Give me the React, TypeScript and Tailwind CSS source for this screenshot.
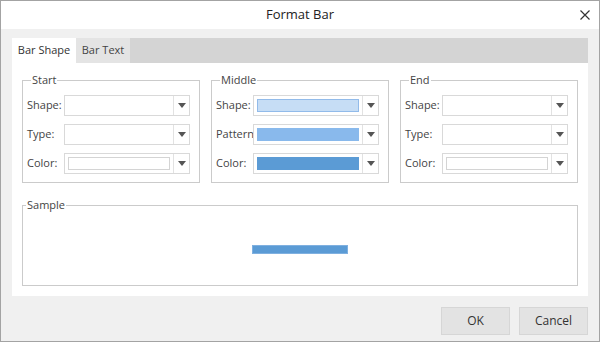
import React from 'react';

type Row = { label: string; kind: 'empty' | 'color' | 'swatch'; fill?: string; border?: string };

const Arrow: React.FC = () => (
  <svg width="8" height="5" viewBox="0 0 8 5">
    <path d="M0 0 H8 L4 5 Z" fill="#555" />
  </svg>
);

const Dropdown: React.FC<{ row: Row }> = ({ row }) => (
  <div className="flex h-[21px] w-[126px] border border-[#d9d9d9] bg-white">
    <div className="flex flex-1 items-center pl-[3px] pr-[3px]">
      {row.kind === 'color' && <div className="h-[13px] w-full border border-[#d4d4d4]" />}
      {row.kind === 'swatch' && (
        <div
          className="h-[13px] w-full border"
          style={{ background: row.fill, borderColor: row.border ?? row.fill }}
        />
      )}
    </div>
    <div className="flex w-[16px] items-center justify-center border-l border-[#e2e2e2]">
      <Arrow />
    </div>
  </div>
);

const Group: React.FC<{ title: string; rows: Row[] }> = ({ title, rows }) => (
  <fieldset className="w-[178px] border border-[#cbcbcb] pb-[8px] pl-[4px] pt-[8px]">
    <legend className="ml-[4px] px-[1px] text-[11px] leading-[14px] text-[#444]">{title}</legend>
    <div className="flex flex-col gap-[8px]">
      {rows.map(r => (
        <div key={r.label} className="flex items-center">
          <span className="w-[37px] text-[11px] text-[#444]">{r.label}</span>
          <Dropdown row={r} />
        </div>
      ))}
    </div>
  </fieldset>
);

const App: React.FC = () => {
  const start: Row[] = [
    { label: 'Shape:', kind: 'empty' },
    { label: 'Type:', kind: 'empty' },
    { label: 'Color:', kind: 'color' },
  ];
  const middle: Row[] = [
    { label: 'Shape:', kind: 'swatch', fill: '#c6ddf5', border: '#92bbea' },
    { label: 'Pattern', kind: 'swatch', fill: '#89b9ec' },
    { label: 'Color:', kind: 'swatch', fill: '#5b9bd5' },
  ];
  const end: Row[] = [
    { label: 'Shape:', kind: 'empty' },
    { label: 'Type:', kind: 'empty' },
    { label: 'Color:', kind: 'color' },
  ];

  return (
    <div
      className="flex h-[342px] w-[600px] flex-col border border-[#a3a3a3] bg-[#f0f0f0] text-[#333]"
      style={{ fontFamily: '"Open Sans", "Noto Sans", sans-serif' }}
    >
      <div className="grid h-[28px] grid-cols-[1fr_auto_1fr] items-center bg-white">
        <div />
        <div className="text-[13px] text-[#222]">Format Bar</div>
        <div className="flex justify-end pr-[9px]">
          <svg width="10" height="10" viewBox="0 0 10 10">
            <path d="M0.5 0.5 L9.5 9.5 M9.5 0.5 L0.5 9.5" stroke="#333" strokeWidth="1.2" />
          </svg>
        </div>
      </div>

      <div className="flex flex-1 flex-col px-[11px] pt-[9px]">
        <div className="flex h-[25px] bg-[#d4d4d4] text-[11px]">
          <div className="flex w-[64px] items-center justify-center bg-white text-[#333]">Bar Shape</div>
          <div className="flex w-[54px] items-center justify-center bg-[#e4e4e4] text-[#444]">Bar Text</div>
        </div>

        <div className="flex h-[233px] flex-col bg-white px-[10px] pt-[10px]">
          <div className="flex gap-[11px]">
            <Group title="Start" rows={start} />
            <Group title="Middle" rows={middle} />
            <Group title="End" rows={end} />
          </div>

          <fieldset className="mt-[15px] h-[88px] border border-[#cbcbcb]">
            <legend className="ml-[3px] px-[1px] text-[11px] leading-[14px] text-[#444]">Sample</legend>
            <div className="flex h-[74px] items-center justify-center">
              <div className="h-[9px] w-[96px] border border-[#7fb0e0] bg-[#5b9bd5]" />
            </div>
          </fieldset>
        </div>

        <div className="flex justify-end gap-[9px] pt-[11px]">
          <button className="h-[28px] w-[69px] border border-[#d6d6d6] bg-[#e3e3e3] text-[12px] text-[#333]">OK</button>
          <button className="h-[28px] w-[69px] border border-[#d6d6d6] bg-[#e3e3e3] text-[12px] text-[#333]">Cancel</button>
        </div>
      </div>
    </div>
  );
};

export default App;
